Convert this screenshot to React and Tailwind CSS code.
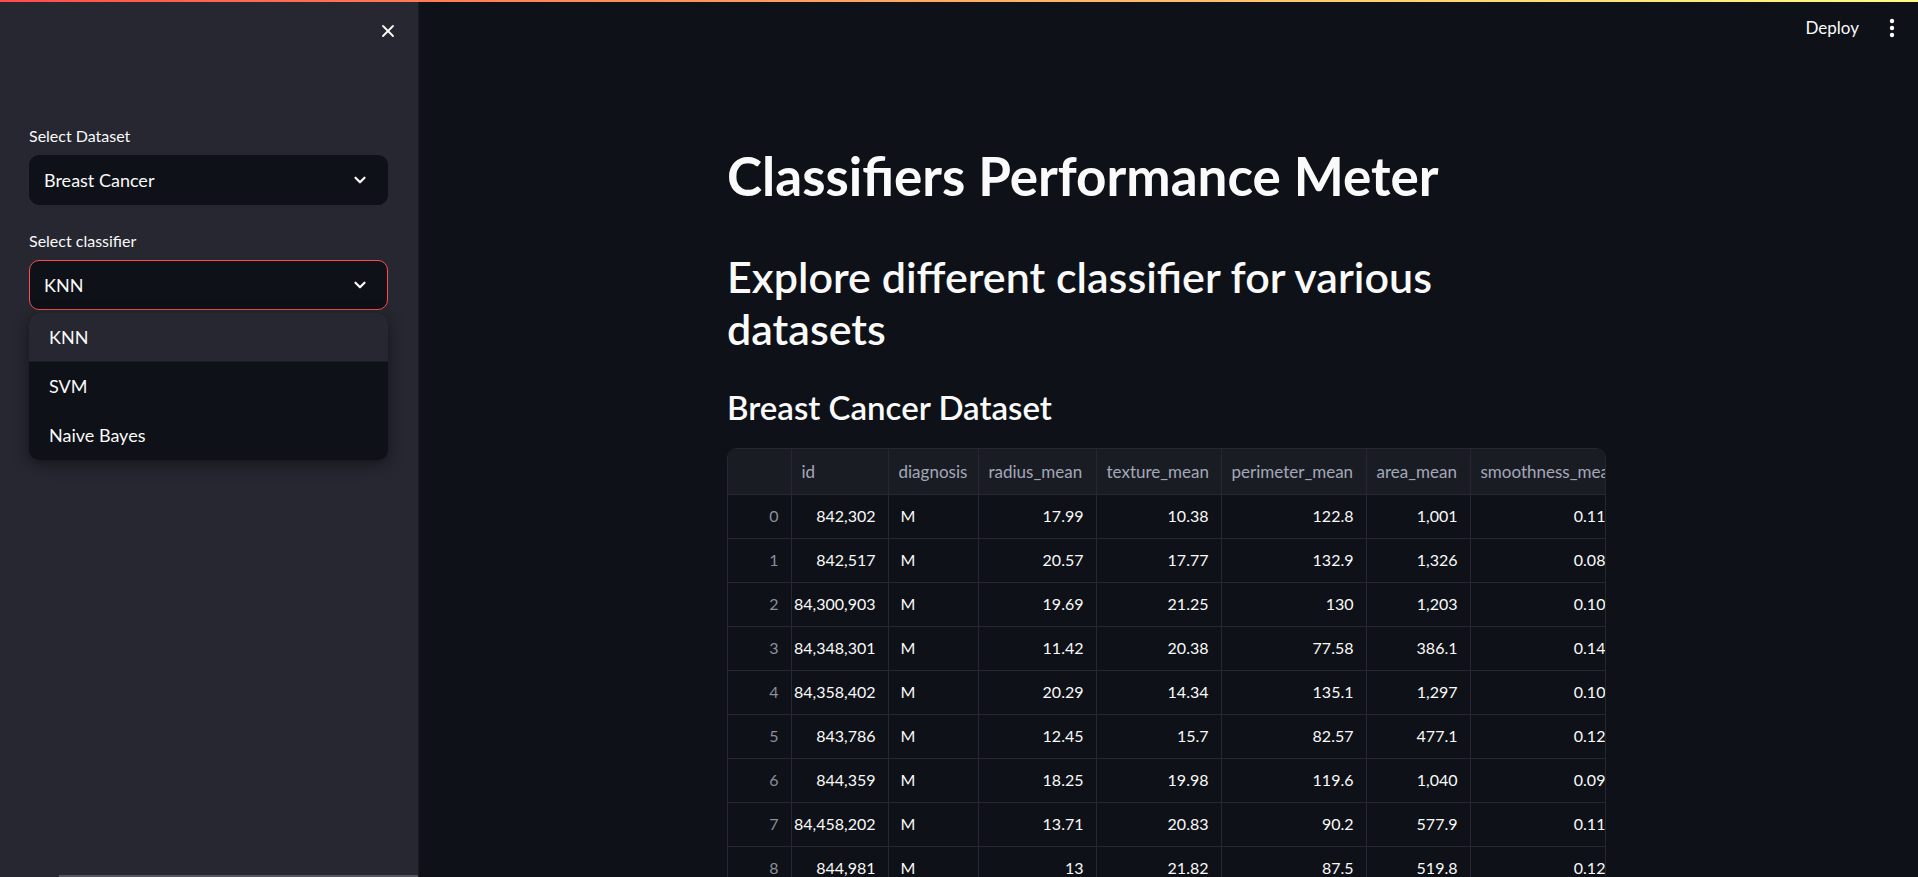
import React from 'react';
import { X } from 'lucide-react';

const font = { fontFamily: 'Lato, "Noto Sans", sans-serif' };

// colonnes du tableau (largeurs mesurées sur la capture)
const columns = [
    { key: 'idx', label: '', w: 'w-[63px]' },
    { key: 'id', label: 'id', w: 'w-[97px]' },
    { key: 'diagnosis', label: 'diagnosis', w: 'w-[90px]' },
    { key: 'radius', label: 'radius_mean', w: 'w-[118px]' },
    { key: 'texture', label: 'texture_mean', w: 'w-[125px]' },
    { key: 'perimeter', label: 'perimeter_mean', w: 'w-[145px]' },
    { key: 'area', label: 'area_mean', w: 'w-[104px]' },
    { key: 'smooth', label: 'smoothness_mean', w: 'w-[166px]' },
];

const rows = [
    ['842,302', 'M', '17.99', '10.38', '122.8', '1,001', '0.1184'],
    ['842,517', 'M', '20.57', '17.77', '132.9', '1,326', '0.0847'],
    ['84,300,903', 'M', '19.69', '21.25', '130', '1,203', '0.1096'],
    ['84,348,301', 'M', '11.42', '20.38', '77.58', '386.1', '0.1425'],
    ['84,358,402', 'M', '20.29', '14.34', '135.1', '1,297', '0.1003'],
    ['843,786', 'M', '12.45', '15.7', '82.57', '477.1', '0.1278'],
    ['844,359', 'M', '18.25', '19.98', '119.6', '1,040', '0.0946'],
    ['84,458,202', 'M', '13.71', '20.83', '90.2', '577.9', '0.1189'],
    ['844,981', 'M', '13', '21.82', '87.5', '519.8', '0.1273'],
];

const Chevron = () => (
    <svg width="18" height="18" viewBox="0 0 24 24" fill="none" stroke="#fafafa" strokeWidth="3" strokeLinecap="round" strokeLinejoin="round">
        <path d="M6 9l6 6 6-6" />
    </svg>
);

const SelectBox = ({ value, active }) => (
    <div className={`h-[50px] rounded-[10px] bg-[#0e1117] flex items-center justify-between pl-[14px] pr-[18px] border ${active ? 'border-[#ff4b4b]' : 'border-[#0e1117]'}`}>
        <span className="text-[18px] text-[#fafafa]">{value}</span>
        <Chevron />
    </div>
);

const Sidebar = () => (
    <aside className="w-[419px] shrink-0 bg-[#262730] flex flex-col pl-[29px] pr-[30px] border-r border-[#1c1d24]">
        <div className="h-[58px] flex items-center justify-end">
            <X size={20} strokeWidth={2.2} className="text-[#fafafa] -mr-[10px]" />
        </div>

        <label className="mt-[65px] text-[16px] leading-[22px] text-[#fafafa]">Select Dataset</label>
        <div className="mt-[8px]">
            <SelectBox value="Breast Cancer" />
        </div>

        <label className="mt-[25px] text-[16px] leading-[22px] text-[#fafafa]">Select classifier</label>
        <div className="mt-[8px] relative">
            <SelectBox value="KNN" active />

            {/* menu ouvert */}
            <div className="absolute left-0 right-0 top-[53px] bg-[#0e1117] rounded-[10px] overflow-hidden shadow-[0_4px_16px_rgba(0,0,0,0.45)] z-10">
                <div className="h-[49px] flex items-center pl-[20px] bg-[#262730] border-b border-[#1a1c24] text-[18px] text-[#fafafa]">KNN</div>
                <div className="h-[49px] flex items-center pl-[20px] text-[18px] text-[#fafafa]">SVM</div>
                <div className="h-[49px] flex items-center pl-[20px] text-[18px] text-[#fafafa]">Naive Bayes</div>
            </div>
        </div>

        <div className="mt-auto h-[2px] -mr-[30px] ml-[30px] bg-[#55565e]" />
    </aside>
);

const DataTable = () => (
    <div className="w-[879px] overflow-hidden rounded-[10px] border border-[#262730]">
        <table className="table-fixed border-collapse text-[16px] w-max">
            <thead>
                <tr className="h-[45px] bg-[#1a1c24]">
                    {columns.map((c, i) => (
                        <th
                            key={c.key}
                            className={`${c.w} font-normal text-left text-[17px] text-[#a3a8b8] px-[10px] whitespace-nowrap overflow-hidden ${i > 0 ? 'border-l border-[#262730]' : ''}`}
                        >
                            {c.label}
                        </th>
                    ))}
                </tr>
            </thead>
            <tbody>
                {rows.map((r, ri) => (
                    <tr key={ri} className="h-[44px] border-t border-[#262730]">
                        <td className="w-[63px] text-right pr-[12px] text-[#8b8f9c]">{ri}</td>
                        {r.map((v, ci) => (
                            <td
                                key={ci}
                                className={`border-l border-[#262730] text-[#fafafa] whitespace-nowrap ${ci === 1 ? 'text-left pl-[12px]' : 'text-right pr-[12px]'}`}
                            >
                                {v}
                            </td>
                        ))}
                    </tr>
                ))}
            </tbody>
        </table>
    </div>
);

export default function App() {
    return (
        <div className="w-[1918px] h-[877px] overflow-hidden bg-[#0e1117] flex flex-col" style={font}>
            <div className="h-[2px] shrink-0 bg-linear-to-r from-[#ff4b4b] to-[#fffd80]" />

            <div className="flex flex-1 min-h-0">
                <Sidebar />

                <main className="flex-1 flex flex-col min-w-0">
                    {/* barre du haut */}
                    <div className="h-[52px] shrink-0 flex items-center justify-end pr-[23px] gap-[30px]">
                        <span className="text-[17px] text-[#fafafa]">Deploy</span>
                        <svg width="6" height="20" viewBox="0 0 6 20" fill="#fafafa">
                            <circle cx="3" cy="3" r="2.2" />
                            <circle cx="3" cy="10" r="2.2" />
                            <circle cx="3" cy="17" r="2.2" />
                        </svg>
                    </div>

                    <div className="w-[879px] ml-[308px] flex flex-col">
                        <h1 className="mt-[89px] text-[53px] leading-[66px] font-bold text-[#fafafa]">
                            Classifiers Performance Meter
                        </h1>
                        <h2 className="mt-[42px] text-[43px] leading-[52px] font-semibold text-[#fafafa]">
                            Explore different classifier for various
                            <br />
                            datasets
                        </h2>
                        <h3 className="mt-[31px] text-[33px] leading-[42px] font-semibold text-[#fafafa]">
                            Breast Cancer Dataset
                        </h3>
                        <div className="mt-[20px]">
                            <DataTable />
                        </div>
                    </div>
                </main>
            </div>
        </div>
    );
}
